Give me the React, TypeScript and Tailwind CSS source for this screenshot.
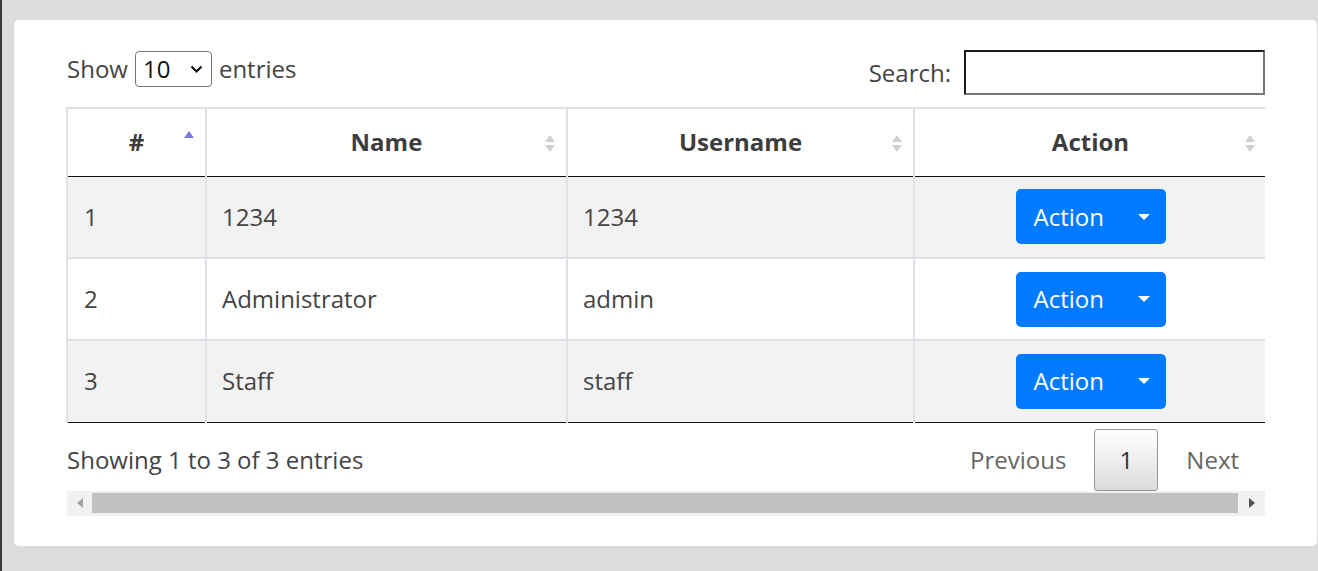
import { ReactNode } from "react";

type User = { id: number; name: string; username: string };

const users: User[] = [
  { id: 1, name: "1234", username: "1234" },
  { id: 2, name: "Administrator", username: "admin" },
  { id: 3, name: "Staff", username: "staff" },
];

function SortIcon({ active }: { active?: boolean }) {
  if (active) {
    return (
      <svg width="12" height="20" viewBox="0 0 12 20" className="absolute right-[10px] top-[20px]">
        <path d="M1 9 L6 2 L11 9 Z" fill="#7b7bdc" />
      </svg>
    );
  }
  return (
    <svg width="12" height="22" viewBox="0 0 12 22" className="absolute right-[10px] top-[24px]">
      <path d="M1 9 L6 2 L11 9 Z" fill="#cfcfcf" />
      <path d="M1 12 L6 19 L11 12 Z" fill="#cfcfcf" />
    </svg>
  );
}

function HeadCell({ children, active, width }: { children: ReactNode; active?: boolean; width: string }) {
  return (
    <th className={`relative ${width} h-[68px] border-l-2 border-[#dee2e6] text-center font-bold text-[#3d3d3d] align-middle`}>
      {children}
      <SortIcon active={active} />
    </th>
  );
}

function ActionButton() {
  return (
    <button className="inline-flex items-center justify-between w-[150px] h-[55px] pl-[18px] pr-[15px] rounded-[5px] bg-[#007bff] text-white">
      <span>Action</span>
      <svg width="14" height="8" viewBox="0 0 14 8">
        <path d="M1 1 L13 1 L7 7 Z" fill="#fff" />
      </svg>
    </button>
  );
}

export default function App() {
  return (
    <div
      className="min-h-[571px] bg-[#dcdcdc] border-l-2 border-[#343a40] pl-[12px] pr-px pt-[20px] text-[24px] leading-[1.4] text-[#444]"
      style={{ fontFamily: '"Open Sans", "Liberation Sans", sans-serif' }}
    >
      <div className="bg-white rounded-[5px] h-[526px] pt-[30px] pl-[52px] pr-[52px]">
        {/* top controls */}
        <div className="flex justify-between items-start h-[45px] pl-px">
          <div className="flex items-center gap-[7px] h-[38px]">
            <span>Show</span>
            <div className="flex items-center justify-between w-[77px] h-[36px] border border-[#767676] rounded-[4px] pl-[7px] pr-[8px] text-[#111]">
              <span>10</span>
              <svg width="13" height="9" viewBox="0 0 13 9">
                <path d="M1.5 1.5 L6.5 6.5 L11.5 1.5" fill="none" stroke="#111" strokeWidth="2.2" />
              </svg>
            </div>
            <span>entries</span>
          </div>
          <div className="flex items-center gap-[13px] h-[45px]">
            <span>Search:</span>
            <div className="w-[301px] h-[45px] border-2 border-t-[#1b1b1b] border-l-[#1b1b1b] border-b-[#767676] border-r-[#767676]" />
          </div>
        </div>

        {/* table */}
        <div className="mt-[12px] w-[1199px] overflow-hidden">
          <table className="w-[1199px] border-collapse table-fixed">
            <thead>
              <tr className="border-t-2 border-[#dee2e6] border-b border-b-[#111]">
                <HeadCell width="w-[139px]" active>#</HeadCell>
                <HeadCell width="w-[361px]">Name</HeadCell>
                <HeadCell width="w-[347px]">Username</HeadCell>
                <HeadCell width="w-[352px]">Action</HeadCell>
              </tr>
            </thead>
            <tbody>
              {users.map((u, i) => (
                <tr
                  key={u.id}
                  className={`h-[82px] ${i % 2 === 0 ? "bg-[#f2f2f2]" : "bg-white"} ${i > 0 ? "border-t-2 border-[#dee2e6]" : ""} ${i === users.length - 1 ? "border-b border-b-[#111]" : ""}`}
                >
                  <td className="border-l-2 border-[#dee2e6] pl-[16px]">{u.id}</td>
                  <td className="border-l-2 border-[#dee2e6] pl-[15px]">{u.name}</td>
                  <td className="border-l-2 border-[#dee2e6] pl-[15px]">{u.username}</td>
                  <td className="border-l-2 border-[#dee2e6] text-center">
                    <ActionButton />
                  </td>
                </tr>
              ))}
            </tbody>
          </table>
        </div>

        {/* footer */}
        <div className="flex justify-between items-start h-[68px] pl-px">
          <span className="mt-[20px]">Showing 1 to 3 of 3 entries</span>
          <div className="flex items-center mt-[6px] pr-[6px] text-[#666]">
            <span className="px-[20px]">Previous</span>
            <span className="mx-[8px] w-[64px] h-[62px] flex items-center justify-center border border-[#979797] rounded-[3px] bg-gradient-to-b from-white to-[#dcdcdc] text-[#333]">
              1
            </span>
            <span className="px-[20px]">Next</span>
          </div>
        </div>

        {/* horizontal scrollbar */}
        <div className="flex items-center w-[1198px] ml-px h-[25px] bg-[#f1f1f1]">
          <div className="w-[25px] flex justify-center">
            <svg width="6" height="10" viewBox="0 0 6 10">
              <path d="M6 0 L0 5 L6 10 Z" fill="#a3a3a3" />
            </svg>
          </div>
          <div className="flex-1 h-[20px] bg-[#c1c1c1]" />
          <div className="w-[27px] flex justify-center">
            <svg width="6" height="10" viewBox="0 0 6 10">
              <path d="M0 0 L6 5 L0 10 Z" fill="#505050" />
            </svg>
          </div>
        </div>
      </div>
    </div>
  );
}
